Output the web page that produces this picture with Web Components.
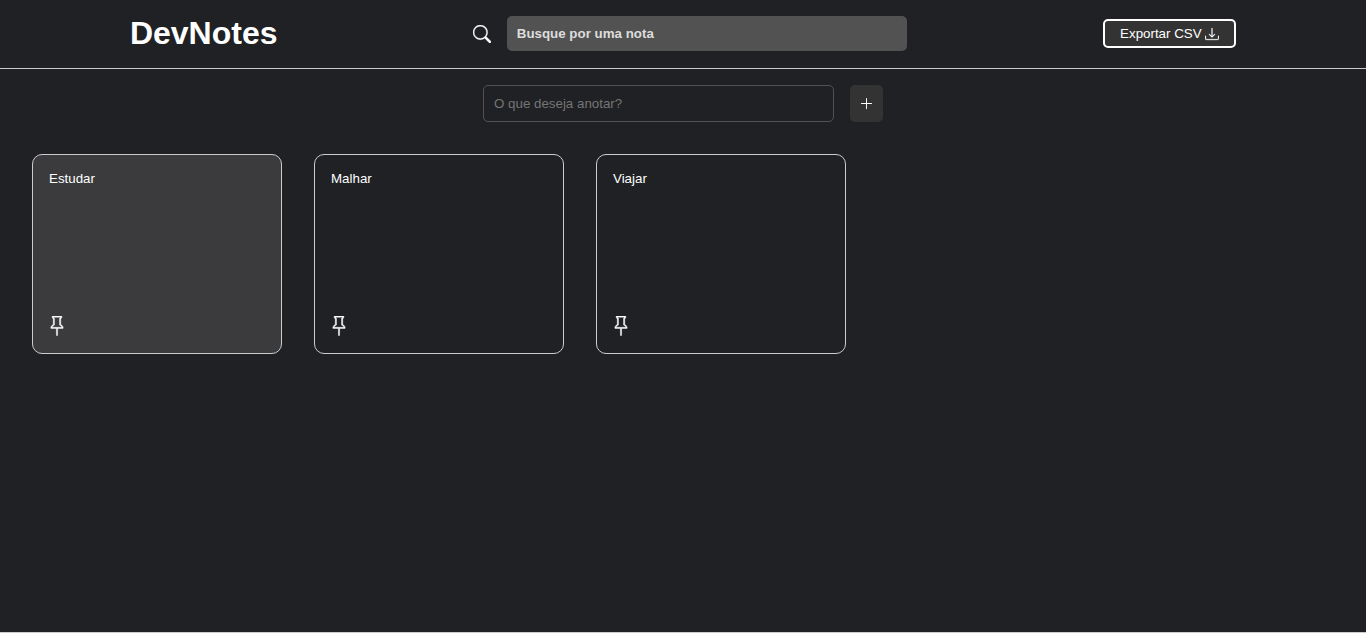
<!DOCTYPE html>
<html lang="pt-BR">
<head>
<meta charset="utf-8">
<title>DevNotes</title>
<style>
  html, body { margin: 0; height: 100%; background: #202124; }
  body { font-family: "Liberation Sans", Arial, sans-serif; color: #fff; overflow: hidden; }
</style>
</head>
<body>
<notes-app>
  <notes-header></notes-header>
  <note-form></note-form>
  <notes-list>
    <note-card active>Estudar</note-card>
    <note-card>Malhar</note-card>
    <note-card>Viajar</note-card>
  </notes-list>
</notes-app>

<script>
// Icons (same shapes as bootstrap icons)
const ICONS = {
  search: '<path d="M11.742 10.344a6.5 6.5 0 1 0-1.397 1.398h-.001q.044.06.098.115l3.85 3.85a1 1 0 0 0 1.415-1.414l-3.85-3.85a1 1 0 0 0-.115-.1zM12 6.5a5.5 5.5 0 1 1-11 0 5.5 5.5 0 0 1 11 0"/>',
  download: '<path d="M.5 9.9a.5.5 0 0 1 .5.5v2.5a1 1 0 0 0 1 1h12a1 1 0 0 0 1-1v-2.5a.5.5 0 0 1 1 0v2.5a2 2 0 0 1-2 2H2a2 2 0 0 1-2-2v-2.5a.5.5 0 0 1 .5-.5"/><path d="M7.646 11.854a.5.5 0 0 0 .708 0l3-3a.5.5 0 0 0-.708-.708L8.5 10.293V1.5a.5.5 0 0 0-1 0v8.793L5.354 8.146a.5.5 0 1 0-.708.708z"/>',
  plus: '<path fill-rule="evenodd" d="M8 2a.5.5 0 0 1 .5.5v5h5a.5.5 0 0 1 0 1h-5v5a.5.5 0 0 1-1 0v-5h-5a.5.5 0 0 1 0-1h5v-5A.5.5 0 0 1 8 2"/>',
  pin: '<path d="M4.146.146A.5.5 0 0 1 4.5 0h7a.5.5 0 0 1 .5.5c0 .68-.342 1.174-.646 1.479-.126.125-.25.224-.354.298v4.431l.078.048c.203.127.476.314.751.555C12.36 7.775 13 8.527 13 9.5a.5.5 0 0 1-.5.5h-4v4.5c0 .276-.224 1.5-.5 1.5s-.5-1.224-.5-1.5V10h-4a.5.5 0 0 1-.5-.5c0-.973.64-1.725 1.17-2.189A6 6 0 0 1 5 6.708V2.277a3 3 0 0 1-.354-.298C4.342 1.674 4 1.179 4 .5a.5.5 0 0 1 .146-.354m1.58 1.408-.002-.001zm-.002-.001.002.001A.5.5 0 0 1 6 2v5a.5.5 0 0 1-.276.447h-.002l-.012.007-.054.03a5 5 0 0 0-.827.58c-.318.278-.585.596-.725.936h7.792c-.14-.34-.407-.658-.725-.936a5 5 0 0 0-.881-.61l-.012-.006h-.002A.5.5 0 0 1 10 7V2a.5.5 0 0 1 .295-.458 1.8 1.8 0 0 0 .351-.271c.08-.08.155-.17.214-.271H5.14q.091.15.214.271a1.8 1.8 0 0 0 .37.282"/>'
};

// bold: the icons in the reference come out a bit heavier than a plain fill
const icon = (name, size, bold = 0) =>
  `<svg width="${size}" height="${size}" viewBox="0 0 16 16" fill="currentColor" stroke="currentColor" stroke-width="${bold}" aria-hidden="true">${ICONS[name]}</svg>`;

class NotesApp extends HTMLElement {
  constructor() {
    super();
    this.attachShadow({ mode: 'open' }).innerHTML = `
      <style>
        :host {
          display: block;
          box-sizing: border-box;
          height: 633px;
          border-bottom: 1px solid #ccc;
        }
      </style>
      <slot></slot>`;
  }
}

class NotesHeader extends HTMLElement {
  constructor() {
    super();
    this.attachShadow({ mode: 'open' }).innerHTML = `
      <style>
        :host {
          display: flex;
          box-sizing: border-box;
          height: 69px;
          padding: 0 32px 1px;
          align-items: center;
          justify-content: space-around;
          border-bottom: 1px solid #ccc;
        }
        h1 { margin: 0; font-size: 32px; line-height: 37px; font-weight: 700; color: #fff; }
        .search { display: flex; align-items: center; gap: 16px; }
        .search svg { display: block; color: #fff; }
        input {
          box-sizing: border-box;
          width: 400px;
          height: 35px;
          padding: 0 9.5px;
          border: 0;
          border-radius: 5px;
          background: #525252;
          color: #ddd;
          font: 700 13.33px "Liberation Sans", Arial, sans-serif;
          outline: none;
        }
        input::placeholder { color: #ddd; opacity: 1; }
        button {
          display: flex;
          align-items: center;
          gap: 3px;
          box-sizing: border-box;
          width: 133px;
          height: 29px;
          padding: 0 15px;
          border: 2px solid #fff;
          border-radius: 5px;
          background: #333;
          color: #fff;
          font: 13.33px "Liberation Sans", Arial, sans-serif;
          white-space: nowrap;
        }
        button svg { color: #fff; flex: none; }
      </style>
      <h1>DevNotes</h1>
      <div class="search">
        ${icon('search', 18, 0.3)}
        <input type="text" placeholder="Busque por uma nota">
      </div>
      <button type="button">Exportar CSV ${icon('download', 14, 0.3)}</button>`;
  }
}

class NoteForm extends HTMLElement {
  constructor() {
    super();
    this.attachShadow({ mode: 'open' }).innerHTML = `
      <style>
        :host {
          display: flex;
          justify-content: center;
          gap: 16px;
          padding-top: 16px;
        }
        input {
          box-sizing: border-box;
          width: 351px;
          height: 37px;
          padding: 0 10px;
          border: 1px solid #525252;
          border-radius: 5px;
          background: transparent;
          color: #fff;
          font: 13.33px "Liberation Sans", Arial, sans-serif;
          outline: none;
        }
        input::placeholder { color: #757575; opacity: 1; }
        button {
          display: flex;
          align-items: center;
          justify-content: center;
          width: 33px;
          height: 37px;
          padding: 0;
          border: 0;
          border-radius: 5px;
          background: #333;
          color: #fff;
        }
      </style>
      <input type="text" placeholder="O que deseja anotar?">
      <button type="button">${icon('plus', 15)}</button>`;
  }
}

class NotesList extends HTMLElement {
  constructor() {
    super();
    this.attachShadow({ mode: 'open' }).innerHTML = `
      <style>
        :host {
          display: grid;
          grid-template-columns: repeat(auto-fill, 250px);
          gap: 32px;
          padding: 32px;
        }
      </style>
      <slot></slot>`;
  }
}

class NoteCard extends HTMLElement {
  constructor() {
    super();
    this.attachShadow({ mode: 'open' }).innerHTML = `
      <style>
        :host {
          display: flex;
          flex-direction: column;
          box-sizing: border-box;
          height: 200px;
          padding: 16px;
          border: 1px solid #ccc;
          border-radius: 10px;
          color: #fff;
          font-size: 13.33px;
          line-height: 15px;
        }
        :host([active]) { background: #3b3b3d; }
        .pin { margin: auto 0 1px -2px; height: 20px; }
        svg { display: block; }
      </style>
      <div><slot></slot></div>
      <div class="pin">${icon('pin', 20, 0.3)}</div>`;
  }
}

customElements.define('notes-app', NotesApp);
customElements.define('notes-header', NotesHeader);
customElements.define('note-form', NoteForm);
customElements.define('notes-list', NotesList);
customElements.define('note-card', NoteCard);
</script>
</body>
</html>
